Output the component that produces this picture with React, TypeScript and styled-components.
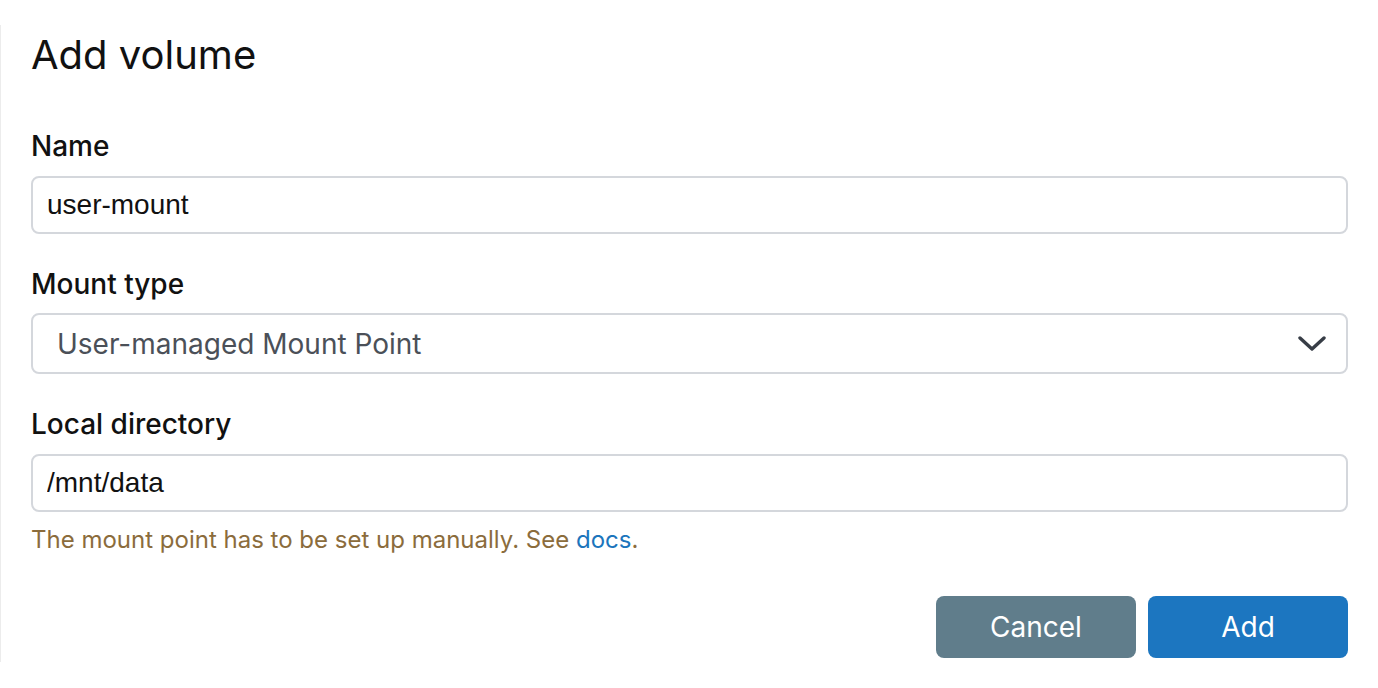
import React from "react";
import styled, { createGlobalStyle } from "styled-components";

const Global = createGlobalStyle`
  html, body { margin: 0; padding: 0; background: #ffffff; }
  body { font-family: Inter, "Noto Sans", sans-serif; color: #111111; }
  * { box-sizing: border-box; }
`;

const Frame = styled.div`
  margin-top: 25px;
  height: 637px;
  border-left: 1px solid #ececec;
  padding: 6px 30px 0 30px;
  display: flex;
  flex-direction: column;
`;

const Title = styled.h1`
  margin: 0 0 50px 0;
  font-size: 40px;
  line-height: 48px;
  font-weight: 400;
  color: #111111;
`;

const Field = styled.div`
  display: flex;
  flex-direction: column;
  margin-bottom: ${(p: { $gap?: number }) => p.$gap ?? 33}px;
`;

const Label = styled.label`
  font-size: 28px;
  line-height: 34px;
  font-weight: 500;
  color: #111111;
  margin-bottom: ${(p: { $mb?: number }) => p.$mb ?? 13}px;
`;

const TextInput = styled.input`
  height: 58px;
  width: 100%;
  border: 2px solid #d4d7dc;
  border-radius: 8px;
  padding: 0 14px;
  font-family: "Liberation Sans", Arial, sans-serif;
  font-size: 28px;
  color: #111111;
  background: #ffffff;
  outline: none;
`;

const SelectBox = styled.div`
  height: 61px;
  width: 100%;
  border: 2px solid #d4d7dc;
  border-radius: 8px;
  padding: 0 20px 0 24px;
  display: flex;
  align-items: center;
  justify-content: space-between;
  font-size: 28px;
  color: #4b5058;
  background: #ffffff;
`;

const Help = styled.p`
  margin: 12px 0 0 0;
  font-size: 24px;
  line-height: 32px;
  color: #8b6c3c;
`;

const DocLink = styled.a`
  color: #1c75bc;
  text-decoration: none;
`;

const Actions = styled.div`
  margin-top: 40px;
  display: flex;
  justify-content: flex-end;
  gap: 12px;
`;

const Button = styled.button<{ $variant: "primary" | "secondary" }>`
  width: 200px;
  height: 62px;
  border: none;
  border-radius: 8px;
  font-family: Inter, "Noto Sans", sans-serif;
  font-size: 28px;
  font-weight: 400;
  color: #ffffff;
  background: ${(p) => (p.$variant === "primary" ? "#1c76c0" : "#607d8b")};
  cursor: pointer;
`;

const Chevron = () => (
  <svg width="28" height="16" viewBox="0 0 28 16" fill="none">
    <path d="M2 2 L14 13 L26 2" stroke="#373d46" strokeWidth="3.4" strokeLinecap="round" strokeLinejoin="round" />
  </svg>
);

export default function App() {
  return (
    <>
      <Global />
      <Frame>
        <Title>Add volume</Title>
        <Field>
          <Label>Name</Label>
          <TextInput defaultValue="user-mount" />
        </Field>
        <Field>
          <Label $mb={12}>Mount type</Label>
          <SelectBox>
            <span>User-managed Mount Point</span>
            <Chevron />
          </SelectBox>
        </Field>
        <Field $gap={0}>
          <Label>Local directory</Label>
          <TextInput defaultValue="/mnt/data" />
        </Field>
        <Help>
          The mount point has to be set up manually. See <DocLink href="#">docs</DocLink>.
        </Help>
        <Actions>
          <Button $variant="secondary">Cancel</Button>
          <Button $variant="primary">Add</Button>
        </Actions>
      </Frame>
    </>
  );
}
